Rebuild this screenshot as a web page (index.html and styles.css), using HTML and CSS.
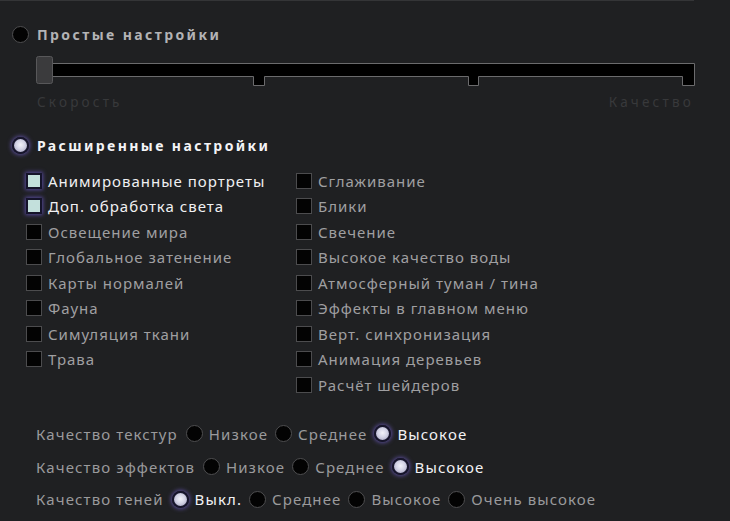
FILE: index.html
```
<!DOCTYPE html>
<html lang="ru">
<head>
<meta charset="utf-8">
<title>Настройки графики</title>
<link rel="stylesheet" href="styles.css">
</head>
<body>
<div class="panel">
    <div class="mode">
        <span class="radio"></span>
        <span class="mode-name">Простые настройки</span>
    </div>
    <div class="slider">
        <svg width="662" height="32" viewBox="36 56 662 32">
            <path d="M52.5 64.5 H694.5 V86.5 H682.5 V77.5 H478.5 V86.5 H468.5 V77.5 H264.5 V86.5 H253.5 V77.5 H52.5 Z" fill="#000" stroke="#6b6b6d" stroke-width="1"/>
            <rect x="36.5" y="57.5" width="16" height="27" rx="2" fill="#3b3b3d" stroke="#58585a"/>
        </svg>
    </div>
    <div class="scale">
        <span>Скорость</span>
        <span>Качество</span>
    </div>
    <div class="mode on">
        <span class="radio"></span>
        <span class="mode-name">Расширенные настройки</span>
    </div>
    <div class="checks">
        <ul>
            <li class="on"><span class="box"></span>Анимированные портреты</li>
            <li class="on"><span class="box"></span>Доп. обработка света</li>
            <li><span class="box"></span>Освещение мира</li>
            <li><span class="box"></span>Глобальное затенение</li>
            <li><span class="box"></span>Карты нормалей</li>
            <li><span class="box"></span>Фауна</li>
            <li><span class="box"></span>Симуляция ткани</li>
            <li><span class="box"></span>Трава</li>
        </ul>
        <ul>
            <li><span class="box"></span>Сглаживание</li>
            <li><span class="box"></span>Блики</li>
            <li><span class="box"></span>Свечение</li>
            <li><span class="box"></span>Высокое качество воды</li>
            <li><span class="box"></span>Атмосферный туман / тина</li>
            <li><span class="box"></span>Эффекты в главном меню</li>
            <li><span class="box"></span>Верт. синхронизация</li>
            <li><span class="box"></span>Анимация деревьев</li>
            <li><span class="box"></span>Расчёт шейдеров</li>
        </ul>
    </div>
    <div class="quality">
        <div class="qrow">
            <span class="qname">Качество текстур</span>
            <span class="opt"><span class="radio"></span>Низкое</span>
            <span class="opt"><span class="radio"></span>Среднее</span>
            <span class="opt on"><span class="radio"></span>Высокое</span>
        </div>
        <div class="qrow">
            <span class="qname">Качество эффектов</span>
            <span class="opt"><span class="radio"></span>Низкое</span>
            <span class="opt"><span class="radio"></span>Среднее</span>
            <span class="opt on"><span class="radio"></span>Высокое</span>
        </div>
        <div class="qrow">
            <span class="qname">Качество теней</span>
            <span class="opt on"><span class="radio"></span>Выкл.</span>
            <span class="opt"><span class="radio"></span>Среднее</span>
            <span class="opt"><span class="radio"></span>Высокое</span>
            <span class="opt"><span class="radio"></span>Очень высокое</span>
        </div>
    </div>
</div>
</body>
</html>
```
FILE: styles.css
```
*{ margin:0; padding:0; box-sizing:border-box;}
html,body{ background:#1f2022; height:100%; overflow:hidden;}
body{ font-family:"Noto Sans","Open Sans",sans-serif; color:#9c9c9e;}
.panel{ width:694px; border-top:1px solid #343537;}

.radio{ width:17px; height:17px; border-radius:50%; background:#030303; border:1.5px solid #4e4e50; flex:none;}
.on > .radio{ border:2px solid #17152c; background:radial-gradient(circle at 50% 45%, #f2f2fa 0, #d4d4e6 45%, #9a98b8 100%); box-shadow:0 0 4px 1px #5b4e9c;}

.mode{ display:flex; align-items:center; height:20px; padding-left:12px; margin-top:23px;}
.mode-name{ margin-left:8px; font-size:14px; font-weight:bold; letter-spacing:2.4px; color:#b3b3b5;}
.mode.on .mode-name{ color:#f4f4f6;}
.mode.on{ margin-top:25px;}

.slider{ margin-top:11px; padding-left:36px; height:32px;}
.slider svg{ display:block;}
.scale{ display:flex; justify-content:space-between; width:694px; padding-left:37px; margin-top:7px; font-size:13.5px; letter-spacing:3.2px; color:#38393b; height:16px; line-height:16px;}

.checks{ display:flex; padding-left:26px; margin-top:13px;}
.checks ul{ list-style:none; width:270px;}
.checks li{ display:flex; align-items:center; height:25.5px; font-size:15px; letter-spacing:1px; color:#9f9fa1;}
.checks li.on{ color:#f0f0f2;}
.box{ width:16px; height:16px; border:1.5px solid #4c4c4e; background:#030303; margin-right:6px; flex:none;}
.on > .box{ border:2px solid #15142a; background:#c3e0dc; box-shadow:0 0 4px 1px #56489a;}

.quality{ padding-left:36px; margin-top:20px;}
.qrow{ display:flex; align-items:center; height:32.7px; font-size:15px; letter-spacing:1.1px;}
.qname{ margin-right:8px; color:#9a9a9c;}
.opt{ display:flex; align-items:center; margin-right:7px; color:#9a9a9c;}
.opt .radio{ margin-right:6px;}
.opt.on{ color:#f2f2f4;}
```
